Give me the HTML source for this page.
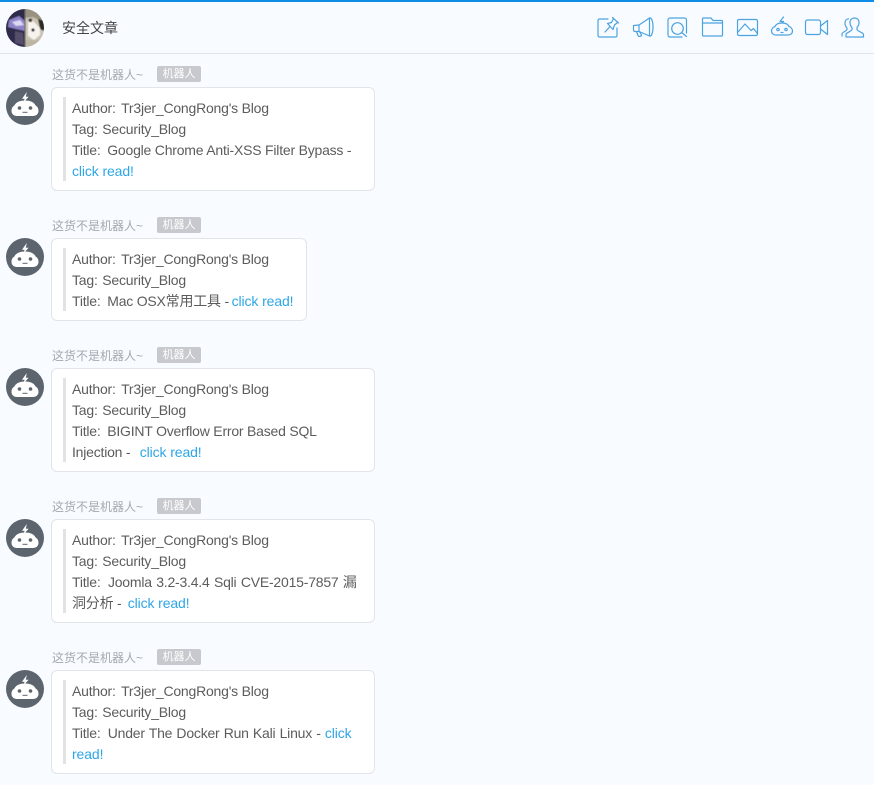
<!DOCTYPE html>
<html><head><meta charset="utf-8">
<style>
html,body{margin:0;padding:0;width:874px;height:785px;overflow:hidden;background:#f8fbff;font-family:"Liberation Sans","Noto Sans CJK SC",sans-serif;}
.top{position:absolute;left:0;top:0;width:874px;height:2px;background:#0f8ee9}
.hr{position:absolute;left:0;top:53px;width:874px;height:1px;background:#e0e5ea}
.title{position:absolute;left:62px;top:18px;font-size:14px;line-height:20px;color:#444}
.ic{position:absolute;left:0;top:0}
.name{position:absolute;left:52px;font-size:12px;line-height:16px;color:#a4a9b0;white-space:nowrap}
.tag{position:absolute;left:157px;width:44px;height:16px;border-radius:2px;background:#c8c9ce;color:#fff;font-size:11px;line-height:16px;text-align:center}
.av{position:absolute;left:6px}
.b{position:absolute;left:51px;box-sizing:border-box;background:#fff;border:1px solid #e1e4e8;border-radius:6px}
.bar{position:absolute;left:11px;top:9px;bottom:9px;width:3px;background:#e2e2e2}
.t{position:absolute;left:20px;top:10px;font-size:14px;line-height:21px;color:#5c5c5c;letter-spacing:-.21px}
.t div{white-space:nowrap}
.l1{margin-right:2px}.l2{margin-right:1px}.l3{margin-right:3px}
a{color:#2ea6e6;text-decoration:none;letter-spacing:-.11px}
</style></head><body>
<div class="top"></div><div class="hr"></div>
<svg width="0" height="0" style="position:absolute"><defs>
<symbol id="robot" viewBox="0 0 38 38"><circle cx="19" cy="19" r="19" fill="#5c656e"/><path d="M20.800 5L16 11.800H18.600L17.400 15.500L22.600 9.800H19.800Z" fill="#fff"/><path d="M19 13.500C25 13.500 28.500 15.800 29.800 18.800C31.800 19.800 32.500 21.800 32.500 24C32.500 27 30 29 27 29H11C8 29 5.500 27 5.500 24C5.500 21.800 6.200 19.800 8.200 18.800C9.500 15.800 13 13.500 19 13.500Z" fill="#fff"/><circle cx="13.500" cy="21" r="1.800" fill="#5c656e"/><circle cx="24.500" cy="21" r="1.800" fill="#5c656e"/><rect x="16.500" y="24.800" width="5" height="1" fill="#5c656e"/></symbol>
<clipPath id="c"><circle cx="19" cy="19" r="19"/></clipPath>
<filter id="bl"><feGaussianBlur stdDeviation="0.5"/></filter>
</defs></svg>
<svg class="ic" style="left:6px;top:9px" width="38" height="38" viewBox="0 0 38 38">
<g clip-path="url(#c)"><g filter="url(#bl)">
<rect x="-2" y="-2" width="21" height="42" fill="#2e2a48"/>
<path d="M3 11L13 7L19 12V22L10 20L2 18Z" fill="#8e84c8"/>
<path d="M6 13L14 11L18 16L10 17Z" fill="#dcd8f2"/>
<path d="M9 22L17 24L18 36L9 34Z" fill="#55506c"/>
<rect x="19" y="-2" width="21" height="42" fill="#c9c2b2"/>
<path d="M19 -2H40V9L33 11L27 8L19 9Z" fill="#9a9280"/>
<path d="M32 10L40 12V23L34 20Z" fill="#2c2926"/>
<path d="M22 9L27 12L34 19V26L28 31L22 27Z" fill="#f6f3ee"/>
<path d="M22 10L26 9.500L26 13L23 13Z" fill="#3a3632"/>
<circle cx="27" cy="21" r="1.600" fill="#222"/>
<path d="M19 31H40V40H19Z" fill="#bdb6a2"/>
</g><rect x="18.500" y="0" width="1" height="38" fill="#6c6a66"/></g></svg>
<div class="title">安全文章</div>

<svg class="ic" width="874" height="54" viewBox="0 0 874 54" fill="none" stroke="#4ba3e0" stroke-width="1.200" stroke-linecap="round" stroke-linejoin="round">
<!-- pin -->
<path d="M608 19H599.500A1.500 1.500 0 0 0 598 20.500V35.500A1.500 1.500 0 0 0 599.500 37H615.500A1.500 1.500 0 0 0 617 35.500V28"/>
<path d="M612.500 17.500L618.500 23M613.500 18.500L611.500 22.500L607.500 23.500L613 29.500L614.500 25L617.500 22.500M610 26.500L605 32"/>
<!-- megaphone -->
<path d="M633.500 25.500L639 25L649.500 18V36L639 31.500H635A1.500 1.500 0 0 1 633.500 30Z"/>
<path d="M649.500 18C651.500 17 653 21.500 653 27C653 32.500 651.500 37 649.500 36"/>
<path d="M636.500 31.500L638 35.500C638.500 37 641.500 36.500 641.500 35L640 32.500"/>
<path d="M639 25V31.500"/>
<!-- search -->
<path d="M686.500 33V20A2 2 0 0 0 684.500 18H670A2 2 0 0 0 668 20V35A2 2 0 0 0 670 37H682"/>
<circle cx="677.500" cy="28.500" r="5.800"/>
<path d="M681.800 32.500L686.500 36.500"/>
<!-- folder -->
<path d="M702.500 24V19A1 1 0 0 1 703.500 18H711L713 20.500H721.500A1 1 0 0 1 722.500 21.500V35A1 1 0 0 1 721.500 36H703.500A1 1 0 0 1 702.500 35Z"/>
<path d="M702.500 23H722.500"/>
<!-- image -->
<rect x="737.500" y="19.500" width="20" height="16" rx="1.500"/>
<path d="M738 32L745 24L751 30.500L753.500 28.500L757 33"/>
<!-- robot -->
<path d="M775 26.500C776 24 778.500 23 782 23C785.500 23 788 24 789 26.500C791 27 792.500 29 792.500 31C792.500 33.500 790.500 35 788 35H776C773.500 35 771.500 33.500 771.500 31C771.500 29 773 27 775 26.500Z"/>
<path d="M783.500 17L780 21.500H783.500L782 23"/>
<circle cx="778" cy="29.500" r="1.200"/><circle cx="786" cy="29.500" r="1.200"/>
<path d="M781 32.500H783"/>
<!-- video -->
<rect x="805.500" y="20" width="15" height="14.500" rx="2"/>
<path d="M820.500 26L827.500 20.500V34.500L820.500 29"/>
<!-- users -->
<path d="M842 36V34C842 32 846 31.500 847 29.500V28C845.500 26.500 845 24.500 845 23C845 20.500 846.500 19 848.500 18.800"/>
<path d="M846 37H863.500V34.500C863.500 32.500 857.500 31.500 857 29.500V27.500C858.500 26 859 24 859 22.500C859 19.500 857 18 854.500 18C852 18 850 19.500 850 22.500C850 24 850.500 26 852 27.500V29.500C851.500 31.500 846 32.500 846 34.500Z"/>
</svg>

<!-- message 1 -->
<div class="name" style="top:67px">这货不是机器人~</div><div class="tag" style="top:66px">机器人</div>
<svg class="av" style="top:87px" width="38" height="38"><use href="#robot" width="38" height="38"/></svg>
<div class="b" style="top:87px;width:324px;height:104px"><div class="bar"></div><div class="t"><div><span class="l1">Author:</span> Tr3jer_CongRong's Blog</div><div><span class="l2">Tag:</span> Security_Blog</div><div><span class="l3">Title:</span> Google Chrome Anti-XSS Filter Bypass -</div><div><a>click read!</a></div></div></div>

<!-- message 2 -->
<div class="name" style="top:218px">这货不是机器人~</div><div class="tag" style="top:217px">机器人</div>
<svg class="av" style="top:238px" width="38" height="38"><use href="#robot" width="38" height="38"/></svg>
<div class="b" style="top:238px;width:256px;height:83px"><div class="bar"></div><div class="t"><div><span class="l1">Author:</span> Tr3jer_CongRong's Blog</div><div><span class="l2">Tag:</span> Security_Blog</div><div><span class="l3">Title:</span> Mac OSX常用工具 - <a style="margin-left:-1px">click read!</a></div></div></div>

<!-- message 3 -->
<div class="name" style="top:348px">这货不是机器人~</div><div class="tag" style="top:347px">机器人</div>
<svg class="av" style="top:368px" width="38" height="38"><use href="#robot" width="38" height="38"/></svg>
<div class="b" style="top:368px;width:324px;height:104px"><div class="bar"></div><div class="t"><div><span class="l1">Author:</span> Tr3jer_CongRong's Blog</div><div><span class="l2">Tag:</span> Security_Blog</div><div><span class="l3">Title:</span> BIGINT Overflow Error Based SQL</div><div>Injection - <a style="margin-left:5.700px">click read!</a></div></div></div>

<!-- message 4 -->
<div class="name" style="top:499px">这货不是机器人~</div><div class="tag" style="top:498px">机器人</div>
<svg class="av" style="top:519px" width="38" height="38"><use href="#robot" width="38" height="38"/></svg>
<div class="b" style="top:519px;width:324px;height:104px"><div class="bar"></div><div class="t"><div><span class="l1">Author:</span> Tr3jer_CongRong's Blog</div><div><span class="l2">Tag:</span> Security_Blog</div><div style="word-spacing:.7px"><span class="l3">Title:</span> Joomla 3.2-3.4.4 Sqli CVE-2015-7857 漏</div><div>洞分析 - <a style="margin-left:2.500px">click read!</a></div></div></div>

<!-- message 5 -->
<div class="name" style="top:650px">这货不是机器人~</div><div class="tag" style="top:649px">机器人</div>
<svg class="av" style="top:670px" width="38" height="38"><use href="#robot" width="38" height="38"/></svg>
<div class="b" style="top:670px;width:324px;height:104px"><div class="bar"></div><div class="t"><div><span class="l1">Author:</span> Tr3jer_CongRong's Blog</div><div><span class="l2">Tag:</span> Security_Blog</div><div style="word-spacing:.5px"><span class="l3">Title:</span> Under The Docker Run Kali Linux - <a>click</a></div><div><a>read!</a></div></div></div>
</body></html>
